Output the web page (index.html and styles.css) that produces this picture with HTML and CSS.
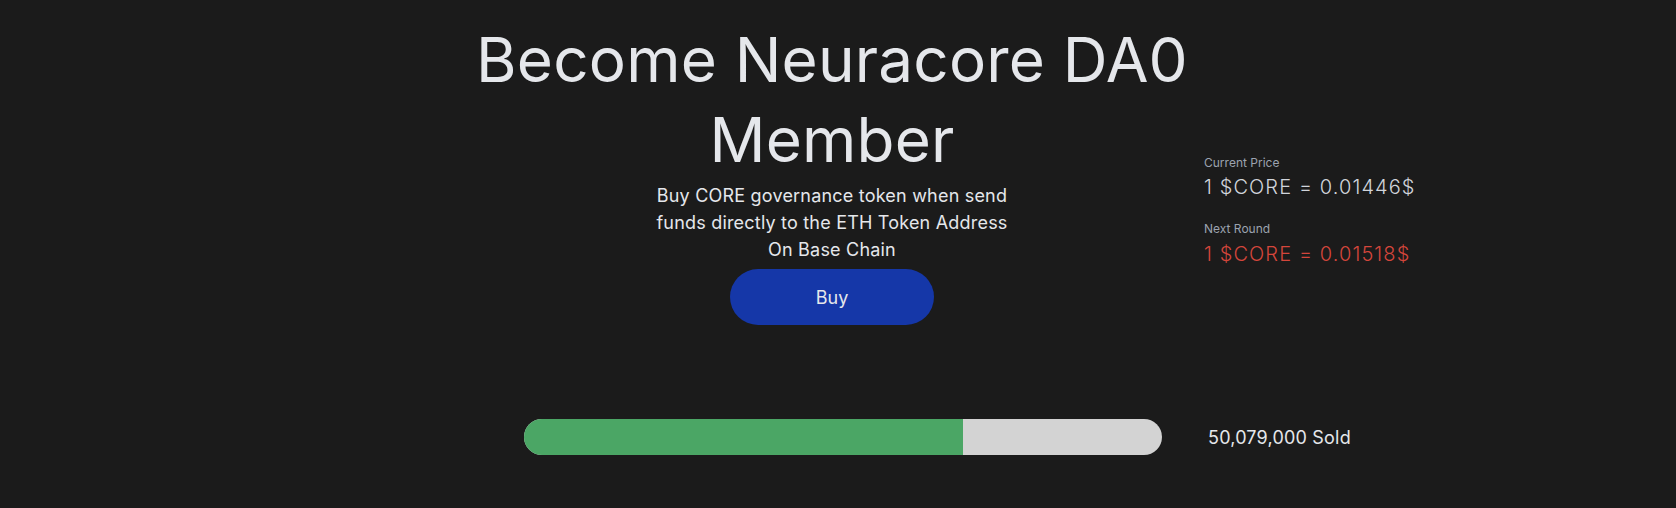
FILE: index.html
```html
<!DOCTYPE html>
<html lang="en">
<head>
<meta charset="utf-8">
<title>Become Neuracore DA0 Member</title>
<link rel="stylesheet" href="styles.css">
</head>
<body>
<main class="page">
  <section class="hero">
    <div class="hero-spacer"></div>
    <div class="hero-main">
      <h1 class="title">Become Neuracore DA0 Member</h1>
      <p class="subtitle">Buy CORE governance token when send funds directly to the ETH Token Address On Base Chain</p>
      <button class="buy-btn" type="button">Buy</button>
    </div>
    <aside class="prices">
      <div class="price-block">
        <div class="price-label">Current Price</div>
        <div class="price-value">1 $CORE = 0.01446$</div>
      </div>
      <div class="price-block next">
        <div class="price-label">Next Round</div>
        <div class="price-value red">1 $CORE = 0.01518$</div>
      </div>
    </aside>
  </section>
  <section class="progress-row">
    <div class="bar">
      <div class="bar-fill" style="width: 68.8%"></div>
    </div>
    <div class="sold">50,079,000 Sold</div>
  </section>
</main>
</body>
</html>
```
FILE: styles.css
```css
html, body {
  margin: 0;
  padding: 0;
  background: #1b1b1b;
}
body {
  font-family: Inter, "Noto Sans", sans-serif;
  color: #e5e7eb;
  width: 1676px;
  height: 508px;
  overflow: hidden;
}
.page {
  padding-top: 20px;
}
.hero {
  display: grid;
  grid-template-columns: 460px 744px 1fr;
}
.hero-main {
  display: flex;
  flex-direction: column;
  align-items: center;
  text-align: center;
}
.title {
  margin: 0;
  font-size: 62px;
  line-height: 80px;
  font-weight: 400;
  letter-spacing: 0.2px;
  color: #e5e7eb;
  max-width: 744px;
}
.subtitle {
  margin: 2px 0 0;
  font-size: 18px;
  line-height: 27px;
  letter-spacing: 0.2px;
  width: 370px;
  color: #e5e7eb;
}
.buy-btn {
  margin-top: 6px;
  width: 204px;
  height: 56px;
  border: none;
  border-radius: 28px;
  background: #1537a8;
  color: #e5e7eb;
  font-family: inherit;
  font-size: 18px;
  padding: 0;
}
.prices {
  padding-top: 135px;
  display: flex;
  flex-direction: column;
}
.price-label {
  font-size: 12px;
  line-height: 16px;
  color: #9ca3af;
}
.price-value {
  margin-top: 2px;
  font-size: 20px;
  line-height: 28px;
  font-weight: 300;
  letter-spacing: 1.1px;
  color: #d1d5db;
}
.price-value.red {
  margin-top: 3px;
  color: #d4463b;
}
.next {
  margin-top: 20px;
}
.progress-row {
  display: flex;
  align-items: center;
  gap: 46px;
  padding-left: 524px;
  margin-top: 94px;
}
.bar {
  width: 638px;
  height: 36px;
  border-radius: 18px;
  background: #d3d3d3;
  overflow: hidden;
  display: flex;
}
.bar-fill {
  height: 100%;
  background: #4ba665;
}
.sold {
  font-size: 18px;
  line-height: 27px;
  letter-spacing: 0.2px;
  color: #e5e7eb;
}
```
